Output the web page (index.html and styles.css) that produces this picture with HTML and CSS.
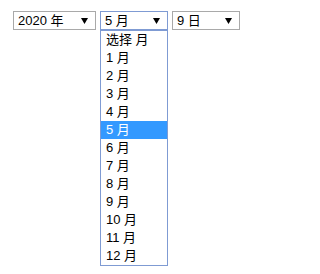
FILE: index.html
```html
<!DOCTYPE html>
<html lang="zh-CN">
<head>
<meta charset="utf-8">
<link rel="stylesheet" href="styles.css">
</head>
<body>
<div class="picker">
  <div class="field">
    <div class="sel sel-year">
      <span class="val">2020 年</span>
      <svg class="arrow" width="7" height="6" viewBox="0 0 7 6"><polygon points="0,0 7,0 3.5,6" fill="#000"/></svg>
    </div>
  </div>
  <div class="field">
    <div class="sel sel-open">
      <span class="val">5 月</span>
      <svg class="arrow" width="7" height="6" viewBox="0 0 7 6"><polygon points="0,0 7,0 3.5,6" fill="#000"/></svg>
    </div>
    <div class="list">
      <div class="opt">选择 月</div>
      <div class="opt">1 月</div>
      <div class="opt">2 月</div>
      <div class="opt">3 月</div>
      <div class="opt">4 月</div>
      <div class="opt on">5 月</div>
      <div class="opt">6 月</div>
      <div class="opt">7 月</div>
      <div class="opt">8 月</div>
      <div class="opt">9 月</div>
      <div class="opt">10 月</div>
      <div class="opt">11 月</div>
      <div class="opt">12 月</div>
    </div>
  </div>
  <div class="field">
    <div class="sel">
      <span class="val">9 日</span>
      <svg class="arrow" width="7" height="6" viewBox="0 0 7 6"><polygon points="0,0 7,0 3.5,6" fill="#000"/></svg>
    </div>
  </div>
</div>
</body>
</html>
```
FILE: styles.css
```css
html, body {
  background: #fff;
}
body {
  margin: 8px;
  font-family: "Liberation Sans", Arial, "Noto Sans CJK SC", sans-serif;
  font-size: 13px;
  color: #000;
}
.picker {
  display: flex;
  align-items: flex-start;
  gap: 4px;
  padding: 3px 0 0 5px;
}
.field {
  display: flex;
  flex-direction: column;
}
.sel {
  box-sizing: border-box;
  height: 19px;
  border: 1px solid #a9a9a9;
  display: flex;
  align-items: center;
  justify-content: space-between;
  padding: 0 7px 0 4px;
  width: 68px;
}
.sel-year {
  width: 83px;
}
.sel-open {
  border-color: #7f9bd3;
}
.val {
  line-height: 17px;
  white-space: nowrap;
}
.arrow {
  display: block;
  flex: none;
}
.list {
  width: 68px;
  box-sizing: border-box;
  border: 1px solid #7f9bd3;
  background: #fff;
}
.opt {
  height: 18px;
  line-height: 18px;
  padding-left: 5px;
  white-space: nowrap;
}
.opt.on {
  background: #3399ff;
  color: #fff;
}
```
